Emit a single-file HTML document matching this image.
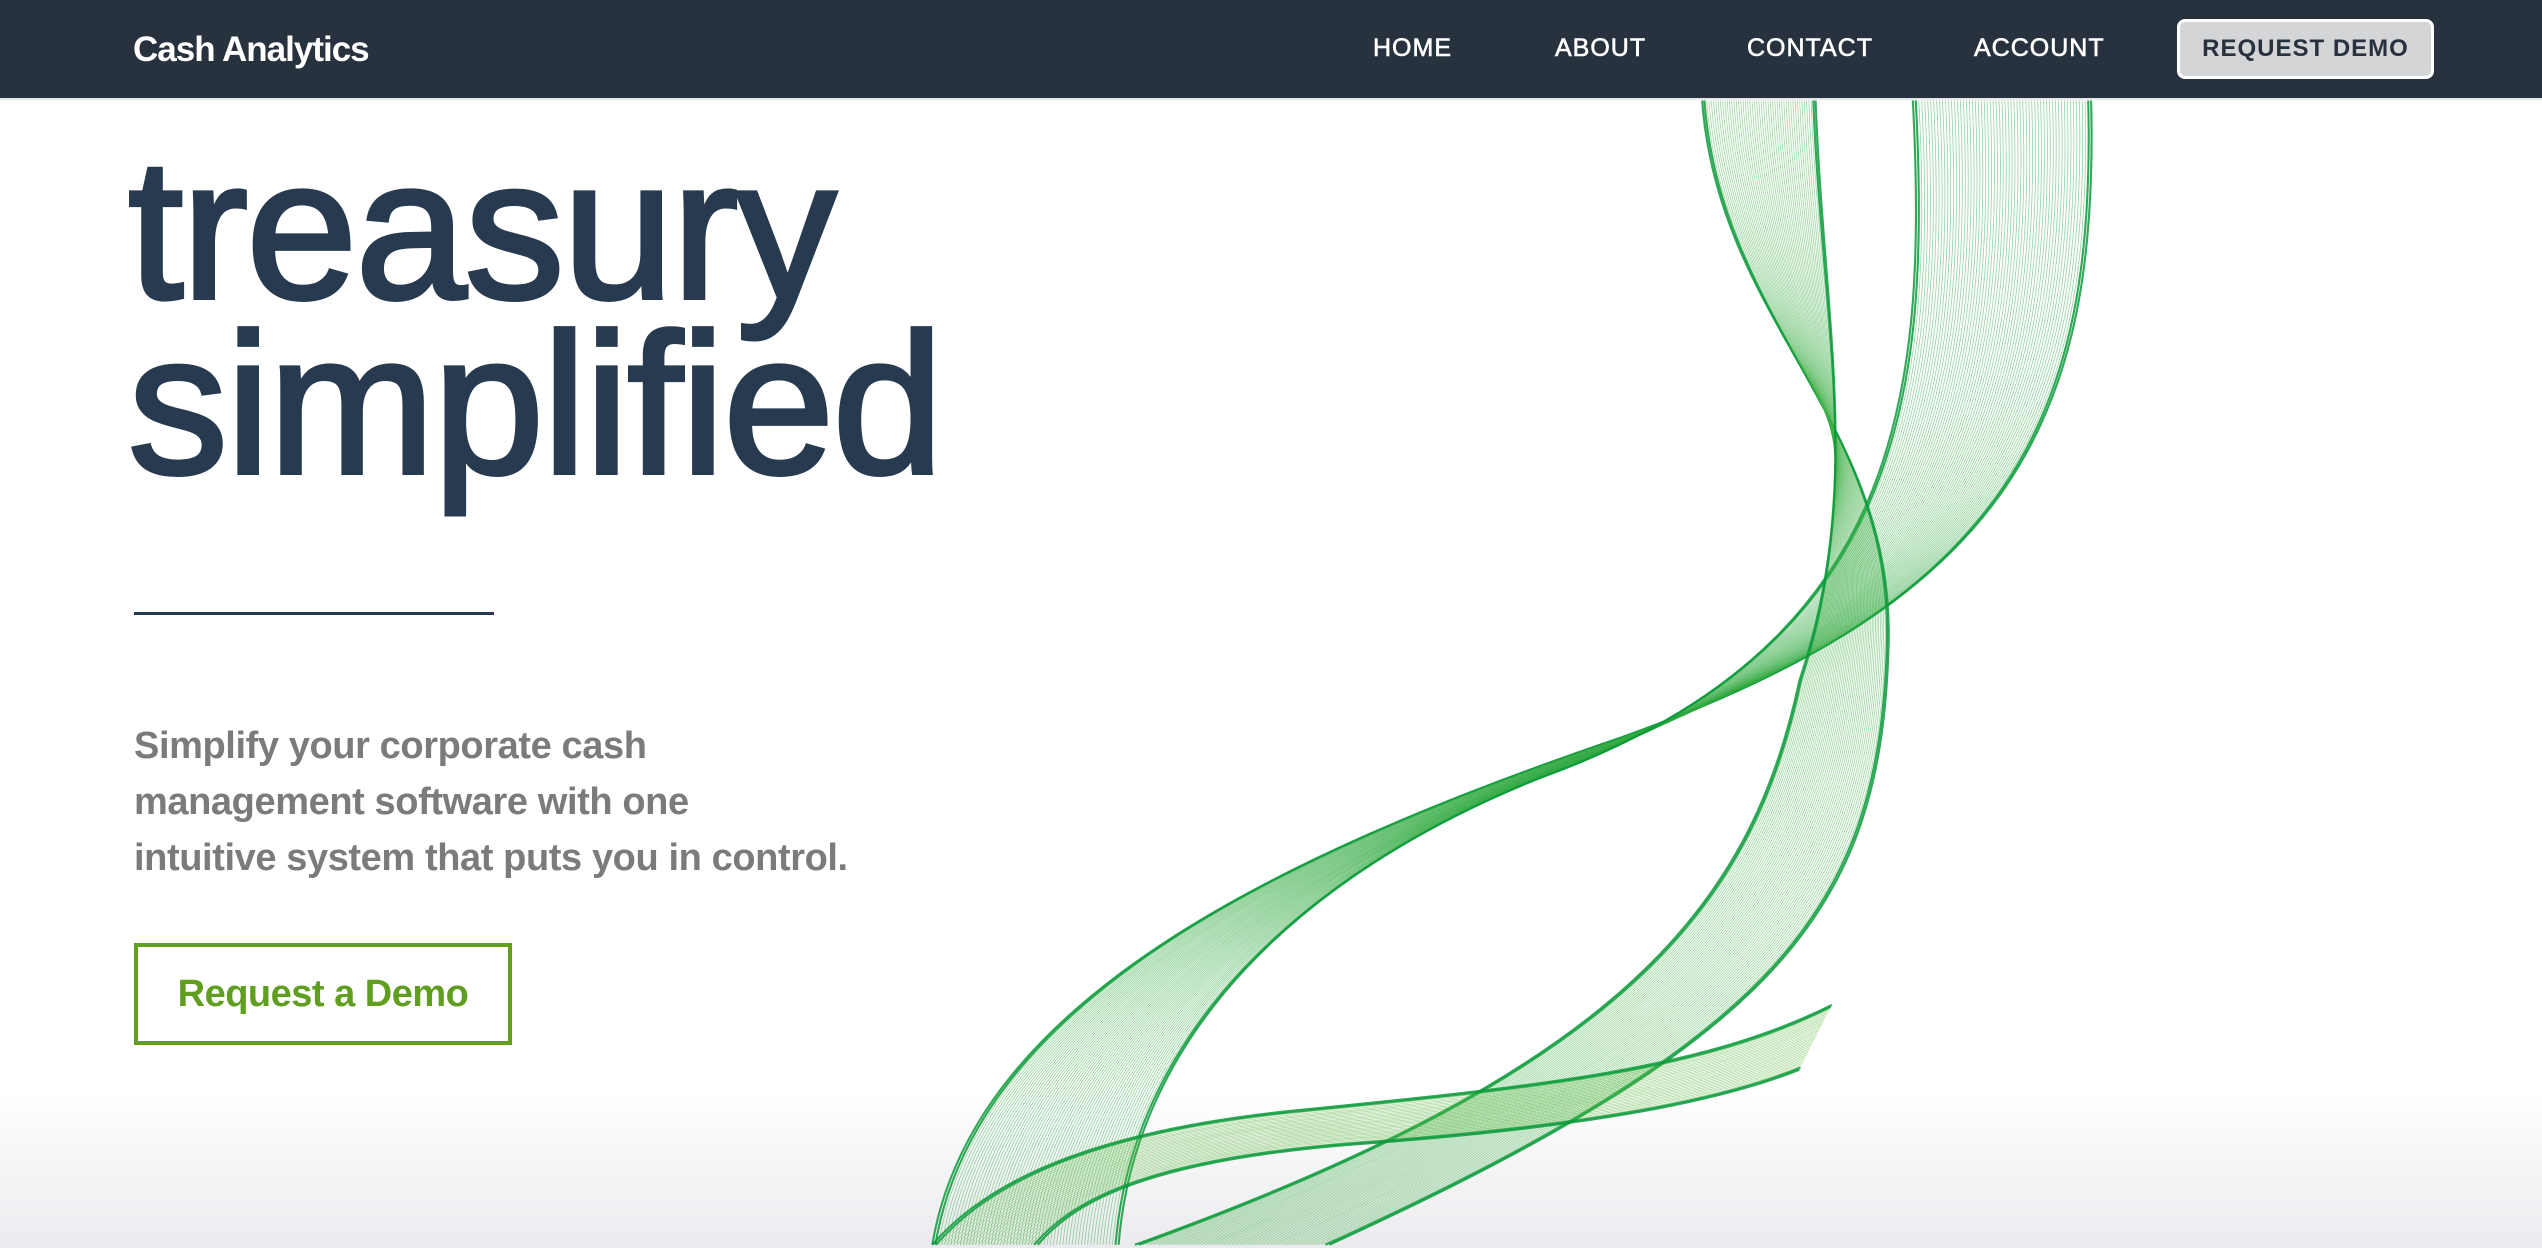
<!DOCTYPE html>
<html><head><meta charset="utf-8">
<style>
*{margin:0;padding:0;box-sizing:border-box}
body{width:2542px;height:1248px;overflow:hidden;background:#fff;font-family:"Liberation Sans",sans-serif;position:relative}
.bg{position:absolute;left:0;top:1090px;width:2542px;height:158px;background:linear-gradient(#fff,#ebebef)}
nav{position:absolute;left:0;top:0;width:2542px;height:100px;background:#28323e;border-bottom:2px solid #e6e6e6}
.logo{position:absolute;left:133px;top:30px;color:#fff;font-weight:bold;font-size:35px;letter-spacing:-1px}
.nl{position:absolute;top:34px;color:#fff;font-size:25px;letter-spacing:1px;-webkit-text-stroke:0.6px #fff}
.btn{position:absolute;left:2177px;top:19px;width:257px;height:60px;background:#d4d5d7;border:3px solid #fff;border-radius:8px;color:#28323e;font-weight:bold;font-size:24px;letter-spacing:1px;text-align:center;line-height:54px}
h1{position:absolute;left:128px;top:142px;font-size:200px;line-height:175px;letter-spacing:-2px;color:#283a4f;font-weight:normal;-webkit-text-stroke:4px #283a4f}
.rule{position:absolute;left:134px;top:612px;width:360px;height:3px;background:#283a4f}
p{position:absolute;left:134px;top:718px;width:950px;font-size:38px;line-height:56px;font-weight:bold;color:#7b7b7b;letter-spacing:-0.4px}
.cta{position:absolute;left:134px;top:943px;width:378px;height:102px;border:4px solid #62a01c;color:#5f9e1f;font-weight:bold;font-size:38px;text-align:center;line-height:94px;letter-spacing:-0.5px}
svg{position:absolute;left:0;top:0}
</style></head><body>
<div class="bg"></div>
<svg id="rib" width="2542" height="1248" viewBox="0 0 1568 770"></svg>
<nav>
<div class="logo">Cash Analytics</div>
<div class="nl" style="left:1373px">HOME</div>
<div class="nl" style="left:1555px">ABOUT</div>
<div class="nl" style="left:1747px">CONTACT</div>
<div class="nl" style="left:1974px">ACCOUNT</div>
<div class="btn">REQUEST DEMO</div>
</nav>
<h1>treasury<br>simplified</h1>
<div class="rule"></div>
<p>Simplify your corporate cash<br>management software with one<br>intuitive system that puts you in control.</p>
<div class="cta">Request a Demo</div>
<script>
var s=document.getElementById('rib'),h='';
function fam(A,B,n,col,op){
 for(var i=0;i<=n;i++){var t=i/n,p=[];
  for(var k=0;k<A.length;k++)p.push((A[k]+(B[k]-A[k])*t).toFixed(1));
  var d='M'+p[0]+','+p[1]+' C'+p[2]+','+p[3]+' '+p[4]+','+p[5]+' '+p[6]+','+p[7]+' C'+p[8]+','+p[9]+' '+p[10]+','+p[11]+' '+p[12]+','+p[13];
  var edge=(i<2||i>n-2);
  h+='<path d="'+d+'" fill="none" stroke="'+(edge?'#0a9a3a':col)+'" stroke-opacity="'+(edge?0.85:op)+'" stroke-width="'+(edge?1.3:0.5)+'"/>';}
}
fam([1290,62,1295,260,1240,370,1000,455,780,530,600,620,575,768],
    [1180,62,1190,250,1170,400,950,480,800,540,700,640,690,768],60,'#2faa40',0.5);
fam([1050,62,1060,200,1170,260,1165,400,1160,560,1100,640,820,768],
    [1120,62,1125,200,1150,300,1110,420,1080,560,1000,660,700,768],50,'#40b048',0.5);
fam([575,768,600,740,650,700,800,685,950,670,1050,660,1130,620],
    [640,768,660,745,700,715,850,705,980,695,1060,680,1110,660],30,'#62bc46',0.5);
s.innerHTML=h;
</script>
</body></html>
